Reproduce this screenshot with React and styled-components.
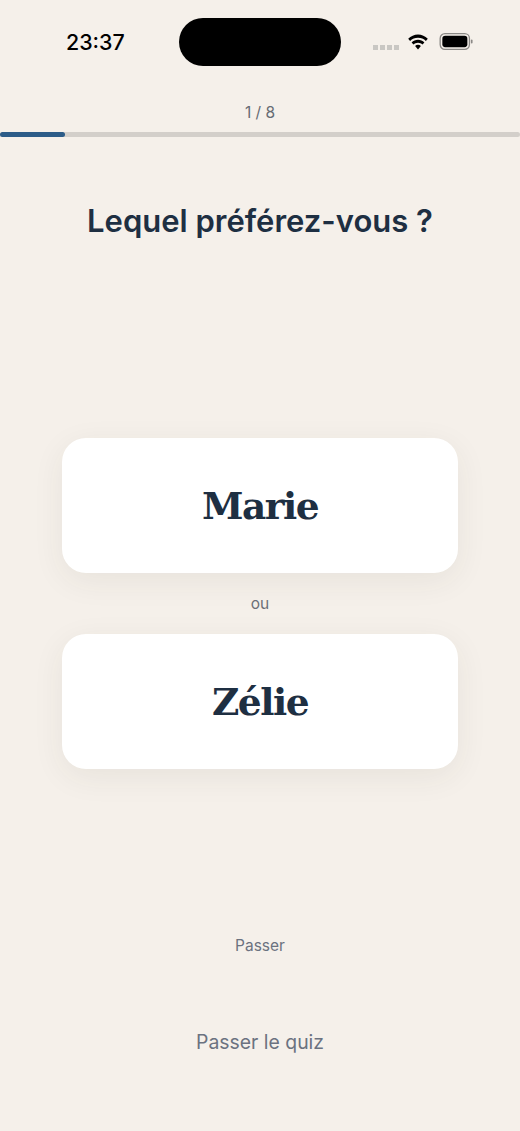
import styled, { createGlobalStyle } from 'styled-components';

const GlobalStyle = createGlobalStyle`
  html, body {
    margin: 0;
    padding: 0;
    background-color: #f5f0ea;
  }
  * {
    box-sizing: border-box;
  }
`;

const Page = styled.div`
  width: 520px;
  height: 1131px;
  display: flex;
  flex-direction: column;
  overflow: hidden;
  color: #1e2f42;
  font-family: Inter, sans-serif;
  background-color: #f5f0ea;
`;

const StatusBar = styled.div`
  height: 66px;
  padding-top: 18px;
  display: grid;
  grid-template-columns: 179px 162px 179px;
`;

const Time = styled.span`
  margin: 11px 0 0 66px;
  color: #000;
  font-size: 21.400px;
  font-weight: 550;
  line-height: 26px;
`;

const Island = styled.div`
  height: 48px;
  border-radius: 24px;
  background-color: #000;
`;

const StatusIcons = styled.div`
  height: 30px;
  margin: 8px 0 0 32px;
  display: flex;
  align-items: center;
`;

const Dots = styled.div`
  margin: 12px 8px 0 0;
  display: flex;
  gap: 2px;

  span {
    width: 5px;
    height: 5px;
    background-color: #c9c7c3;
  }
`;

const WifiIcon = styled.svg`
  margin-top: 3px;
`;

const BatteryWrap = styled.div`
  margin-left: 10px;
  display: flex;
`;

const Progress = styled.div`
  margin-top: 37px;
  display: flex;
  flex-direction: column;
  align-items: center;
  gap: 9px;
`;

const Counter = styled.span`
  color: #666b73;
  font-size: 15.500px;
  line-height: 20px;
`;

const Track = styled.div`
  width: 100%;
  height: 5px;
  border-radius: 3px;
  background-color: #d3cfca;
`;

const Fill = styled.div`
  height: 100%;
  border-radius: 3px;
  background-color: #2c5c88;
`;

const Title = styled.h1`
  margin: 65px 0 0;
  font-size: 31px;
  font-weight: 600;
  line-height: 38px;
  text-align: center;
`;

const Choices = styled.div`
  margin-top: 198px;
  padding: 0 62px;
  display: flex;
  flex-direction: column;
  align-items: stretch;
`;

const Choice = styled.button`
  height: 134.500px;
  padding: 2px 0 0;
  color: #1e2f42;
  font-family: "DejaVu Serif", serif;
  font-size: 37.500px;
  font-weight: 700;
  letter-spacing: -1.500px;
  border: 0;
  border-radius: 24px;
  background-color: #fff;
  box-shadow: 0 8px 32px rgba(60, 50, 40, 0.07);
`;

const Or = styled.span`
  height: 61.500px;
  color: #6b6f76;
  font-size: 15.500px;
  line-height: 61.500px;
  text-align: center;
`;

const SkipOne = styled.span`
  margin-top: 167px;
  color: #6b7280;
  font-size: 15.500px;
  line-height: 20px;
  text-align: center;
`;

const SkipQuiz = styled.span`
  margin-top: 72px;
  color: #6b7280;
  font-size: 19.400px;
  line-height: 28px;
  text-align: center;
`;

function Wifi() {
  return (
    <WifiIcon width="22" height="17" viewBox="0 0 22 16" fill="#000">
      <path d="M11 3.200c3 0 5.800 1.200 7.900 3.200l1.900-2.100C18.200 1.700 14.700 0 11 0S3.800 1.700 1.200 4.300l1.900 2.100C5.200 4.400 8 3.200 11 3.200z" />
      <path d="M11 8.200c1.700 0 3.300.7 4.500 1.800l1.900-2.100C15.700 6.200 13.400 5.200 11 5.200s-4.700 1-6.400 2.700L6.500 10c1.200-1.100 2.800-1.800 4.500-1.800z" />
      <path d="M11 10.300c-1.100 0-2.100.4-2.900 1.200L11 15l2.900-3.500c-.8-.8-1.800-1.200-2.900-1.200z" />
    </WifiIcon>
  );
}

function Battery() {
  return (
    <svg width="35" height="17" viewBox="0 0 36 18">
      <rect x="0.700" y="0.700" width="31" height="16.600" rx="5" fill="none" stroke="#8b8986" strokeWidth="1.400" />
      <rect x="3" y="3" width="26.500" height="12" rx="3" fill="#000" />
      <rect x="33.200" y="7" width="1.800" height="4" rx="0.900" fill="#8b8986" />
    </svg>
  );
}

function App() {
  return (
    <Page>
      <GlobalStyle />
      <StatusBar>
        <Time>23:37</Time>
        <Island />
        <StatusIcons>
          <Dots>
            <span />
            <span />
            <span />
            <span />
          </Dots>
          <Wifi />
          <BatteryWrap>
            <Battery />
          </BatteryWrap>
        </StatusIcons>
      </StatusBar>
      <Progress>
        <Counter>1 / 8</Counter>
        <Track>
          <Fill style={{ width: `${(1 / 8) * 100}%` }} />
        </Track>
      </Progress>
      <Title>Lequel préférez-vous ?</Title>
      <Choices>
        <Choice>Marie</Choice>
        <Or>ou</Or>
        <Choice>Zélie</Choice>
      </Choices>
      <SkipOne>Passer</SkipOne>
      <SkipQuiz>Passer le quiz</SkipQuiz>
    </Page>
  );
}

export default App;
